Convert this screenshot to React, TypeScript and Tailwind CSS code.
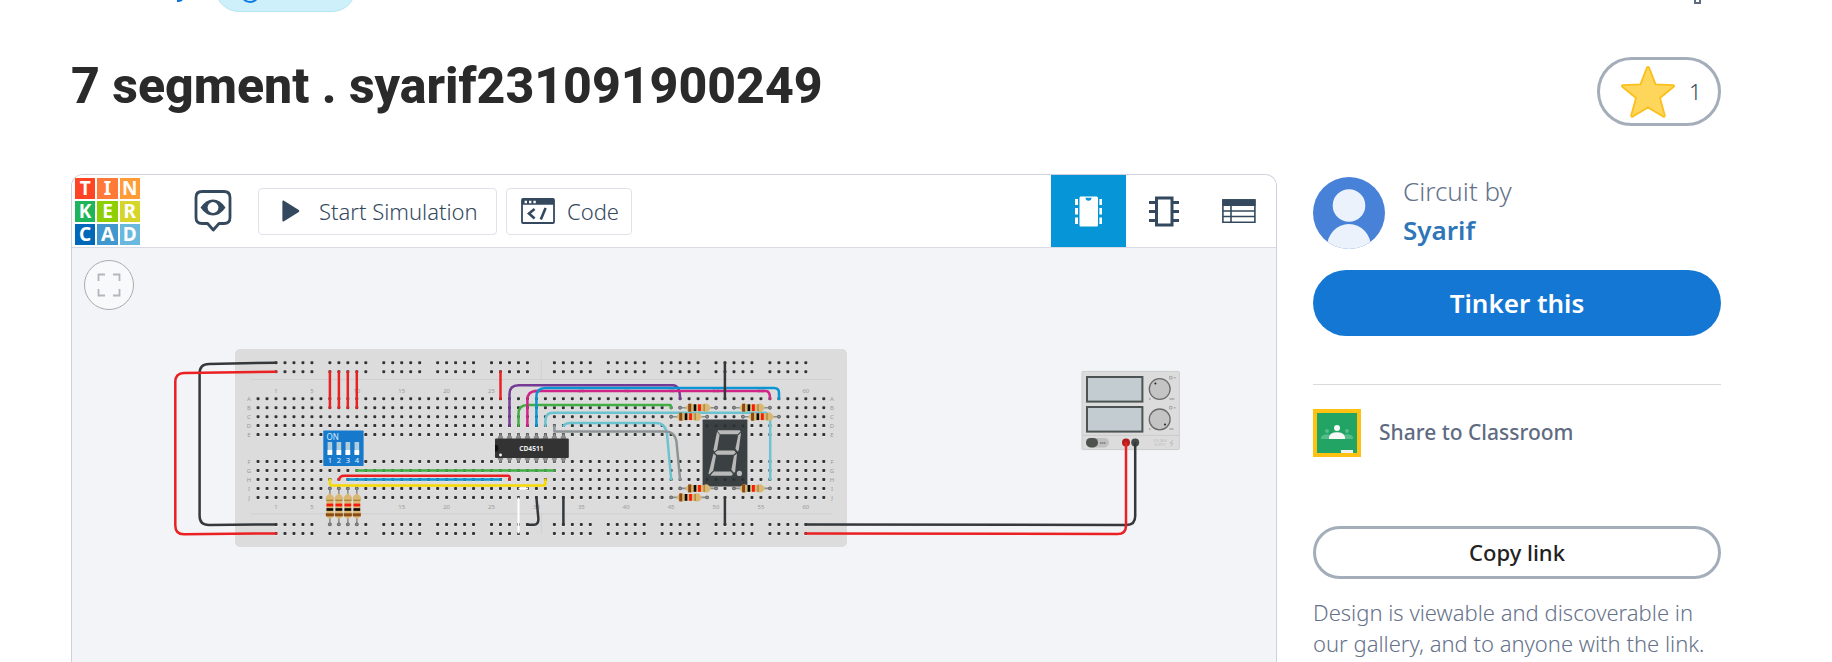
const PITCH = 8.98;
const col = (c: number) => 276 + (c - 1) * PITCH;

const TERMINAL_ROWS: [string, number][] = [
  ["A", 397.7],
  ["B", 406.7],
  ["C", 415.7],
  ["D", 424.6],
  ["E", 433.6],
  ["F", 460.4],
  ["G", 469.4],
  ["H", 478.4],
  ["I", 487.4],
  ["J", 496.4],
];
const RAIL_ROWS = [361.7, 370.7, 523.4, 532.4];
const RAIL_GROUPS = [1, 7, 13, 19, 25, 32, 38, 44, 50, 56];
const COLUMN_LABELS = [1, 5, 10, 15, 20, 25, 30, 35, 40, 45, 50, 55, 60];

function Hole({ x, y }: { x: number; y: number }) {
  return (
    <>
      <circle cx={x} cy={y + 0.5} r={2} fill="#f2f2f2" opacity={0.7} />
      <rect x={x - 1.5} y={y - 1.5} width={3} height={3} rx={0.9} fill="#333" />
    </>
  );
}

function Breadboard() {
  const columns = Array.from({ length: 64 }, (_, i) => i - 1);
  return (
    <g>
      <rect x={235} y={348} width={612} height={198} rx={5} fill="#dcdcdc" />
      <g stroke="#cfcfcf" strokeWidth={1}>
        <path d="M251 378.5H832M251 512.8H832" />
        <path d="M541.3 358v20M541.3 513v20" opacity={0.8} />
      </g>
      {TERMINAL_ROWS.map(([name, y]) => (
        <g key={name}>
          {columns.map((c) => (
            <Hole key={c} x={col(c)} y={y} />
          ))}
          <g fontSize={6} fill="#9b9b9b" textAnchor="middle">
            <text x={249} y={y + 2.2}>{name}</text>
            <text x={832} y={y + 2.2}>{name}</text>
          </g>
        </g>
      ))}
      {RAIL_ROWS.map((y) =>
        RAIL_GROUPS.map((start) =>
          [0, 1, 2, 3, 4].map((i) => <Hole key={`${y}-${start}-${i}`} x={col(start + i)} y={y} />),
        ),
      )}
      <g fontSize={6} fill="#9b9b9b" textAnchor="middle">
        {COLUMN_LABELS.map((n) => (
          <g key={n}>
            <text x={col(n)} y={391.6}>{n}</text>
            <text x={col(n)} y={508.2}>{n}</text>
          </g>
        ))}
      </g>
    </g>
  );
}

function Resistor({ x, y, vertical = false }: { x: number; y: number; vertical?: boolean }) {
  return (
    <g transform={`translate(${x} ${y})${vertical ? " rotate(-90)" : ""}`}>
      <path d="M0 0H36" stroke="#8a8f92" strokeWidth={1.6} />
      <circle r={1.5} fill="#8f8f8f" stroke="#666" strokeWidth={0.8} />
      <circle cx={36} r={1.5} fill="#8f8f8f" stroke="#666" strokeWidth={0.8} />
      <path
        d="M5.3 0C6.5 -2 8 -4 10 -4.2C12 -4.2 12.5 -3.4 14 -3.4H22.5C24 -3.4 24.5 -4.2 26.5 -4.2C28.5 -4 29.5 -2 31 0C29.5 2 28.5 4 26.5 4.2C24.5 4.2 24 3.4 22.5 3.4H14C12.5 3.4 12 4.2 10 4.2C8 4 6.5 2 5.3 0Z"
        fill="#dab873"
      />
      <rect x={8.1} y={-4} width={3} height={8} fill="#8c4a16" />
      <rect x={13.6} y={-3.4} width={2.6} height={6.8} fill="#0a0a0a" />
      <rect x={18} y={-3.4} width={2.8} height={6.8} fill="#f91a0c" />
      <rect x={23.4} y={-3.6} width={1.3} height={7.2} fill="#a8853a" />
    </g>
  );
}

function DipSwitch() {
  return (
    <g>
      <rect x={323.3} y={429.4} width={40.3} height={35.6} rx={0.8} fill="#1779cc" />
      <text x={326.5} y={438.6} fontSize={8} fill="#d7ecff">ON</text>
      {[0, 1, 2, 3].map((i) => (
        <g key={i}>
          <rect x={327.6 + i * PITCH} y={441} width={4.6} height={12.8} fill="#b4cddb" />
          <rect x={327.6 + i * PITCH} y={449} width={4.6} height={5} fill="#fff" />
          <text x={329.9 + i * PITCH} y={461.8} fontSize={7.6} fill="#e4f2ff" textAnchor="middle">
            {i + 1}
          </text>
        </g>
      ))}
    </g>
  );
}

function Chip() {
  return (
    <g>
      {[26, 27, 28, 29, 30, 31, 32, 33].map((c) => (
        <g key={c} fill="#8d8d8d">
          <path d={`M${col(c) - 2.6} 438V435.6L${col(c) - 1} 434.4V432.6H${col(c) + 1}V434.4L${col(c) + 2.6} 435.6V438Z`} />
          <path d={`M${col(c) - 2.6} 456V458.6L${col(c) - 1} 459.8V461.6H${col(c) + 1}V459.8L${col(c) + 2.6} 458.6V456Z`} />
        </g>
      ))}
      <rect x={495} y={437.4} width={73.8} height={19.6} rx={1} fill="#333" />
      <path d="M495 443.8a3.4 3.4 0 0 1 0 6.8Z" fill="#111" />
      <circle cx={500.5} cy={454} r={1.4} fill="#fff" />
      <text x={531.4} y={449.5} fontSize={6.6} fontWeight={700} fill="#eee" textAnchor="middle">
        CD4511
      </text>
    </g>
  );
}

function SevenSegment() {
  return (
    <g>
      <rect x={702.6} y={418.4} width={44.8} height={67} rx={0.8} fill="#3b4043" />
      <g fill="#2c3033">
        {[49, 50, 51, 52, 53].map((c) => (
          <g key={c}>
            <circle cx={col(c)} cy={424.8} r={1.5} />
            <circle cx={col(c)} cy={478.6} r={1.5} />
          </g>
        ))}
      </g>
      <g fill="#b9b9b9">
        <path d="M718.2 429.2H739.6L740.6 430.4L737.6 433.2H720L717.4 430Z" />
        <path d="M717 430.8L719.6 433.8L717.2 448.2L714.6 450.4L713.4 449Z" />
        <path d="M741 431.6L738.2 434.2L735.4 447.8L737.6 450.4L738.8 449Z" />
        <path d="M714.8 451.6L717.6 449.6H734L736 451.6L733.4 453.8H716.8Z" />
        <path d="M713.4 452.4L716 454.8L713.2 469.6L709.2 473.4L708.6 472.2Z" />
        <path d="M737 452.6L734 454.8L731.4 468.8L734 472L735.2 470.6Z" />
        <path d="M710.4 474.4L713.8 470.6H731L733 473.2L731.4 474.8H711.2Z" />
        <circle cx={739.4} cy={472.4} r={2.6} />
      </g>
    </g>
  );
}

function PowerSupply() {
  return (
    <g>
      <rect x={1082} y={370.4} width={97.4} height={78.2} rx={1.2} fill="#dcdcdc" stroke="#cdcdcd" />
      <path d="M1082 434.4H1179" stroke="#cbcbcb" />
      <rect x={1087} y={376} width={55.4} height={24.6} fill="#c3cdd1" stroke="#4c5352" strokeWidth={2} />
      <rect x={1087} y={406} width={55.4} height={24.6} fill="#c3cdd1" stroke="#4c5352" strokeWidth={2} />
      <circle cx={1159.7} cy={388} r={10.4} fill="#c4c4c4" stroke="#6a6a6a" strokeWidth={1.3} />
      <circle cx={1159.7} cy={418.4} r={10.4} fill="#c4c4c4" stroke="#6a6a6a" strokeWidth={1.3} />
      <circle cx={1155.4} cy={382.4} r={1} fill="#222" />
      <circle cx={1165} cy={423.6} r={1} fill="#222" />
      <g fill="none" stroke="#a8a8a8" strokeWidth={1}>
        <path d="M1169.6 375.4h2.4v2.6h-2.4ZM1173.6 376.8h2.4M1169.6 405.4h2.4v2.6h-2.4ZM1173.6 406.8h2.4" />
        <path d="M1149 398h1.6M1169.4 398h5M1149 428h1.6M1169.4 428h4" stroke="#8c8c8c" />
      </g>
      <rect x={1086} y={437} width={23} height={9.4} rx={4.6} fill="#c0c0c0" />
      <rect x={1086} y={437} width={12} height={9.4} rx={4.6} fill="#4e5350" />
      <path d="M1100 442h5.4" stroke="#777" strokeWidth={1.6} strokeDasharray="1.5 0.5" />
      <text x={1160} y={441.4} fontSize={3.2} fill="#bdbdbd" textAnchor="middle">VOLTAGE</text>
      <text x={1160} y={444.8} fontSize={3.2} fill="#bdbdbd" textAnchor="middle">SUPPLY</text>
      <path d="M1173 438.6L1170 442.2H1173L1170.8 445.4" stroke="#bdbdbd" fill="none" />
      <circle cx={1126} cy={441.6} r={4} fill="#b21d1d" />
      <circle cx={1135.2} cy={441.6} r={4} fill="#454a49" />
    </g>
  );
}

const WIRES: [string, string][] = [
  ["#34383b", "M276 361.7L209 362.9Q199.6 363 199.6 372.4V515Q199.6 524 209 524L276 523.4"],
  ["#ea2023", "M276 370.7L184 371.9Q175.3 372 175.3 381V524.4Q175.3 533.2 184 533.2L276 532.4"],
  ["#34383b", "M805.8 523.6L1126.5 524Q1135.2 524 1135.2 515V442"],
  ["#ea2023", "M805.8 532.4L1117.5 533Q1126 533 1126 524.4V442"],
  ["#ea2023", "M329.9 370.7V406.7M338.9 370.7V406.7M347.8 370.7V406.7M356.8 370.7V406.7M500.5 370.7V397.8"],
  ["#743a94", "M509.5 424.8V393Q509.5 384.2 518.5 384.2H673Q680 384.4 680.1 397.8"],
  ["#41ad45", "M518.5 424.8V413Q518.5 404 527.5 404H670Q671.2 404 671.2 407"],
  ["#d02586", "M527.4 424.8V399Q527.4 390 536.4 390H766Q770 390 770 397.8"],
  ["#0c95d3", "M536.4 424.8V396Q536.4 387 545.4 387H774Q779 387 779 392V397.8"],
  ["#6cc3d0", "M545.4 424.8V420Q545.4 411.8 553 411.8H765Q770.2 413 770.2 418V478.5"],
  ["#6cc3d0", "M563.4 424.8Q566 422 570 422H656Q665.4 422 667 433L671.2 478.5"],
  ["#8d9496", "M554.4 424.8V430.4H666Q674.4 430.4 676.4 440L680.1 478.5"],
  ["#41ad45", "M356.8 469.6H554.4"],
  ["#0c95d3", "M347.8 478.5H500.5"],
  ["#ea2023", "M338.9 478.6Q340 474.8 344 474.8H508Q510.6 475 509.5 478.6"],
  ["#f8d900", "M329.9 478.4V482Q329.9 484.4 332.5 484.4H543Q545.4 484.4 545.4 482V478.4"],
  ["#34383b", "M536.4 496.4L538.4 518Q538.4 523.8 534 523.8H527.6M563.4 496.4V523.4"],
  ["#34383b", "M724.9 361.7V397.7M724.9 496.4V523.4"],
];

function CircuitDrawing() {
  return (
    <svg
      viewBox="72 247 1204 414"
      className="block w-full"
      fontFamily="'Noto Sans', sans-serif"
      role="img"
      aria-label="Breadboard circuit"
    >
      <Breadboard />
      <Chip />
      <DipSwitch />
      <PowerSupply />
      {[7, 8, 9, 10].map((c) => (
        <Resistor key={c} x={col(c)} y={523.4} vertical />
      ))}
      <g fill="none" strokeWidth={2.5} strokeLinecap="round" strokeLinejoin="round">
        {WIRES.map(([color, d], i) => (
          <path key={i} d={d} stroke={color} />
        ))}
      </g>
      <path d="M518.5 487.4H528M518.5 496.4V532.4" stroke="#fff" strokeWidth={2} />
      <SevenSegment />
      <Resistor x={col(46)} y={406.7} />
      <Resistor x={col(45)} y={415.7} />
      <Resistor x={col(52)} y={406.7} />
      <Resistor x={col(53)} y={415.7} />
      <Resistor x={col(46)} y={487.4} />
      <Resistor x={col(52)} y={487.4} />
      <Resistor x={col(45)} y={496.4} />
    </svg>
  );
}

const LOGO_CELLS: [string, string][] = [
  ["T", "#ff4425"],
  ["I", "#ff7a38"],
  ["N", "#ff9c38"],
  ["K", "#1eb55a"],
  ["E", "#8fce00"],
  ["R", "#d5d52c"],
  ["C", "#0068b9"],
  ["A", "#4198cf"],
  ["D", "#69b9df"],
];

function Logo() {
  return (
    <a
      href="#home"
      className="grid w-[65px] grid-cols-3 gap-[2px] text-center text-[19px] leading-[20px] font-bold text-white"
    >
      {LOGO_CELLS.map(([letter, color]) => (
        <span key={letter} className="h-[21px]" style={{ backgroundColor: color }}>
          {letter}
        </span>
      ))}
    </a>
  );
}

function EyeIcon() {
  return (
    <svg width="38" height="42" viewBox="0 0 38 42" fill="none">
      <path
        d="M8 1.5H30Q36 1.5 36 7.5V27.5Q36 33.5 30 33.5H25L19.3 40L13.6 33.5H8Q2 33.5 2 27.5V7.5Q2 1.5 8 1.5Z"
        stroke="#34495e"
        strokeWidth="2.8"
        strokeLinejoin="round"
      />
      <path d="M6.5 17.5Q12 9.5 19 9.5T31.5 17.5Q26 25.5 19 25.5T6.5 17.5Z" fill="#34495e" />
      <circle cx="19" cy="17.5" r="5.4" fill="#fff" />
    </svg>
  );
}

function CodeIcon() {
  return (
    <svg width="34" height="26" viewBox="0 0 34 26" fill="none">
      <rect x="1" y="1" width="32" height="24" rx="1" stroke="#34495e" strokeWidth="1.8" />
      <path d="M1 1H33V6.8H1Z" fill="#34495e" />
      <path d="M3.6 4H6M8 4H10.4M12.4 4H14.8" stroke="#fff" strokeWidth="2.4" />
      <path d="M13.6 11L8 15.6L13.6 20.4M24.6 10L19.8 21.4" stroke="#34495e" strokeWidth="2.6" />
    </svg>
  );
}

function CircuitViewIcon() {
  return (
    <svg width="27" height="31" viewBox="0 0 27 31" fill="#fff">
      <path d="M5.5 0.5H21.5Q23 0.5 23 2V29Q23 30.5 21.5 30.5H5.5Q4.5 30.5 4.5 29V2Q4.5 0.5 5.5 0.5Z" />
      <path d="M10.4 1.8H16.6Q16.4 4.8 13.5 4.8T10.4 1.8Z" fill="#0696d7" />
      <path d="M0 3H3V9H0ZM0 12H3V18.6H0ZM0 21.4H3V28H0ZM24.4 3H27V9H24.4ZM24.4 12H27V18.6H24.4ZM24.4 21.4H27V28H24.4Z" />
    </svg>
  );
}

function SchematicIcon() {
  return (
    <svg width="30" height="31" viewBox="0 0 30 31" fill="none" stroke="#34495e" strokeWidth="3">
      <rect x="7.5" y="2" width="15.5" height="27" />
      <path d="M0 6.5H6M0 15.5H6M0 24.5H6M24 6.5H30M24 15.5H30M24 24.5H30" />
    </svg>
  );
}

function ListIcon() {
  return (
    <svg width="34" height="24" viewBox="0 0 34 24" fill="none" stroke="#34495e" strokeWidth="1.6">
      <rect x="0.9" y="0.9" width="32" height="22.4" />
      <path d="M0.5 0.5H33.5V7H0.5Z" fill="#34495e" stroke="none" />
      <path d="M1 12H33M1 17.5H33M9 7V23" />
    </svg>
  );
}

function ViewButton({ label, children }: { label: string; children: React.ReactNode }) {
  return (
    <button type="button" aria-label={label} className="flex w-[75px] items-center justify-center self-stretch">
      {children}
    </button>
  );
}

function StarIcon() {
  return (
    <svg width="54" height="52" viewBox="0 0 54 52">
      <path
        d="M26 1.6Q27 0.4 28 1.6L34.6 18.4L52.4 19.2Q53.6 19.8 52.6 20.8L39 32L43.8 49.6Q43.6 51.2 42.2 50.6L27 41.4L11.8 50.6Q10.4 51.2 10.2 49.6L15 32L1.4 20.8Q0.4 19.8 1.6 19.2L19.4 18.4Z"
        fill="#ffd65c"
        stroke="#fbbf1c"
        strokeWidth="1.8"
        strokeLinejoin="round"
      />
    </svg>
  );
}

function Avatar() {
  return (
    <svg width="72" height="72" viewBox="0 0 72 72" className="shrink-0">
      <clipPath id="avatar-circle">
        <circle cx="36" cy="36" r="36" />
      </clipPath>
      <g clipPath="url(#avatar-circle)">
        <rect width="72" height="72" fill="#4882d8" />
        <circle cx="36" cy="28.5" r="16.3" fill="#ebf2fb" />
        <ellipse cx="36" cy="70" rx="22" ry="23" fill="#ebf2fb" />
      </g>
    </svg>
  );
}

function ClassroomIcon() {
  return (
    <svg width="48" height="48" viewBox="0 0 48 48">
      <rect width="48" height="48" fill="#ffc112" />
      <rect x="4" y="4" width="40" height="40" fill="#21a464" />
      <g fill="#57bb8a">
        <circle cx="14" cy="22" r="2" />
        <circle cx="34" cy="22" r="2" />
        <path d="M8 30V28.6Q8.4 25.4 14 25.2Q18 25.4 19 27V30ZM40 30V28.6Q39.6 25.4 34 25.2Q30 25.4 29 27V30Z" />
      </g>
      <circle cx="24" cy="19" r="3" fill="#f7f7f7" />
      <path d="M16 30V28Q17 23.4 24 23.2Q31 23.4 32 28V30Z" fill="#f7f7f7" />
      <rect x="28" y="41" width="12" height="3" fill="#f1f1f1" />
    </svg>
  );
}

export default function App() {
  return (
    <div className="flex h-screen flex-col overflow-hidden bg-white font-['Noto_Sans',sans-serif] text-[22px] text-[#2a2a2a]">
      <header className="flex h-3 shrink-0 items-end overflow-hidden pr-[131px] pl-[176px]">
        <svg className="self-start" width="8" height="3" viewBox="0 0 8 3" fill="none">
          <path d="M6.4 -1Q5 1.4 1 0.9" stroke="#0c70d8" strokeWidth="2" />
        </svg>
        <div className="ml-[31px] flex h-12 w-[141px] rounded-full border border-[#b4e6f0] bg-[#cdf0fb] px-6">
          <svg width="20" height="38" viewBox="0 0 20 38" fill="none">
            <circle cx="10" cy="28" r="9" stroke="#0c7be0" strokeWidth="2" />
          </svg>
        </div>
        <svg className="ml-auto self-start" width="7" height="4" viewBox="0 0 7 4" fill="none">
          <path d="M1 0V3H6V0" stroke="#5f6b82" strokeWidth="2" />
        </svg>
      </header>

      <div className="flex shrink-0 items-center justify-between pt-[45px] pr-[111px] pl-[71px]">
        <h1 className="pb-3 font-[Roboto,sans-serif] text-[50px] leading-[56px] font-extrabold">
          7 segment . syarif231091900249
        </h1>
        <button
          type="button"
          className="flex h-[69px] w-[124px] items-center gap-[14px] rounded-full border-3 border-[#a4adba] pl-[21px] font-light text-[#34495e]"
        >
          <StarIcon />
          <span>1</span>
        </button>
      </div>

      <main className="flex min-h-0 flex-1 gap-9 pt-12 pr-[111px] pl-[71px]">
        <section className="min-w-0 flex-1 overflow-hidden rounded-t-[12px] border border-b-0 border-[#cfd2dc] bg-[#f3f4f7]">
          <div className="flex h-[73px] items-center border-b border-[#d9dbe4] bg-white pl-[3px] text-[#34495e]">
            <Logo />
            <button type="button" aria-label="Annotations" className="ml-[54px]">
              <EyeIcon />
            </button>
            <button
              type="button"
              className="ml-[26px] flex h-[47px] w-[239px] items-center rounded-[4px] border border-[#e0e2e9] pl-[23px] font-light"
            >
              <svg width="18" height="22" viewBox="0 0 18 22" fill="#34495e">
                <path d="M1.6 0.6L16.8 10Q18 11 16.8 12L1.6 21.4Q0.4 21.8 0.4 20.6V1.4Q0.4 0.2 1.6 0.6Z" />
              </svg>
              <span className="ml-[19px]">Start Simulation</span>
            </button>
            <button
              type="button"
              className="ml-[9px] flex h-[47px] w-[126px] items-center gap-3 rounded-[4px] border border-[#e0e2e9] pl-[14px] font-light"
            >
              <CodeIcon />
              <span>Code</span>
            </button>
            <div className="ml-auto flex self-stretch">
              <div className="flex bg-[#0696d7]">
                <ViewButton label="Circuit view">
                  <CircuitViewIcon />
                </ViewButton>
              </div>
              <ViewButton label="Schematic view">
                <SchematicIcon />
              </ViewButton>
              <ViewButton label="Component list">
                <ListIcon />
              </ViewButton>
            </div>
          </div>
          <div className="relative">
            <CircuitDrawing />
            <button
              type="button"
              aria-label="Zoom to fit"
              className="absolute top-3 left-3 flex size-[50px] items-center justify-center rounded-full border border-[#a9abae] bg-[#f8f9fb]"
            >
              <svg width="24" height="24" viewBox="0 0 24 24" fill="none" stroke="#b4b6b9" strokeWidth="1.8">
                <path d="M1.5 8V1.5H8M16 1.5H22.5V8M22.5 16V22.5H16M8 22.5H1.5V16" />
              </svg>
            </button>
          </div>
        </section>

        <aside className="flex w-[408px] shrink-0 flex-col pt-[3px]">
          <div className="flex h-[78px] gap-[18px]">
            <Avatar />
            <div className="-mt-[5px] text-[26px] leading-[39px]">
              <p className="font-light text-[#66728a]">Circuit by</p>
              <a href="#syarif" className="font-semibold text-[#2e76b8]">
                Syarif
              </a>
            </div>
          </div>
          <button
            type="button"
            className="mt-[15px] h-[66px] shrink-0 rounded-full bg-[#1477d4] text-[26px] font-semibold text-white"
          >
            Tinker this
          </button>
          <hr className="mt-12 border-[#d9dade]" />
          <a href="#classroom" className="mt-6 flex items-center gap-[18px] text-[21px] font-medium text-[#5f6b82]">
            <ClassroomIcon />
            Share to Classroom
          </a>
          <button
            type="button"
            className="mt-[69px] h-[53px] shrink-0 rounded-full border-3 border-[#a4adba] font-medium text-[#222]"
          >
            Copy link
          </button>
          <p className="mt-[18px] leading-[31px] font-light text-[#66728a]">
            Design is viewable and discoverable in our gallery, and to anyone with the link.
          </p>
        </aside>
      </main>
    </div>
  );
}
